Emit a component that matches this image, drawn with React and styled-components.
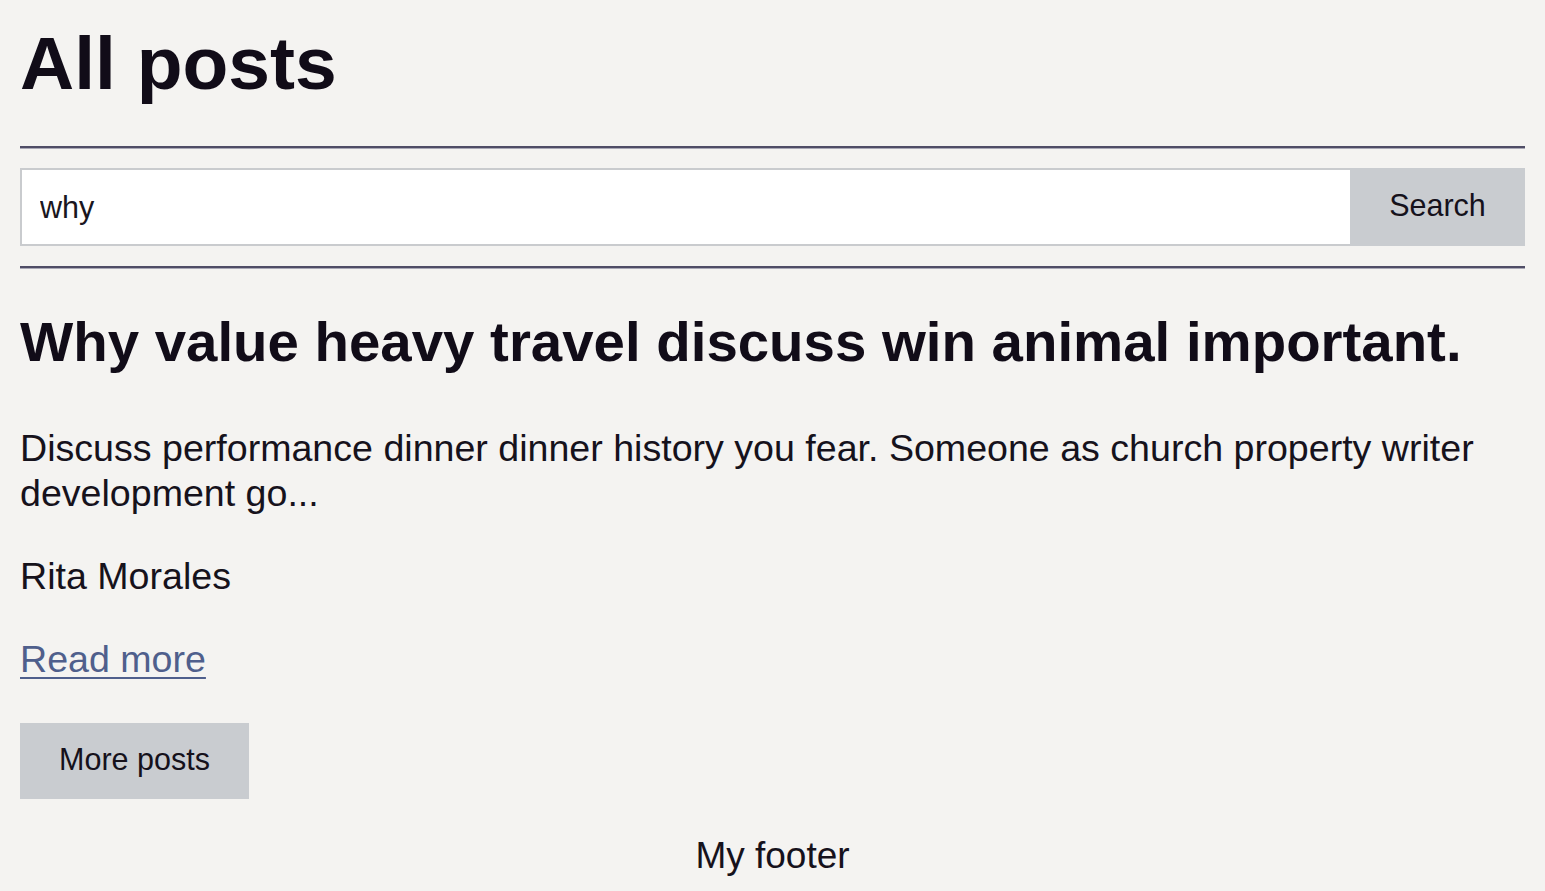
import React from 'react'
import styled, { createGlobalStyle } from 'styled-components'

const GlobalStyle = createGlobalStyle`
  html, body {
    margin: 0;
    padding: 0;
    background: #f4f3f1;
  }
  body {
    font-family: "Liberation Sans", Arial, Helvetica, sans-serif;
    color: #120e18;
  }
`

const Page = styled.div`
  box-sizing: border-box;
  padding: 0 20px 0 20px;
  width: 100%;
  min-height: 891px;
  display: flex;
  flex-direction: column;
`

const Title = styled.h1`
  font-size: 75px;
  font-weight: bold;
  line-height: 86px;
  margin: 20px 0 0 0;
  color: #110c18;
`

const Rule = styled.hr`
  border: none;
  border-top: 2px solid #4f4d66;
  border-bottom: 1px solid #a9a8b6;
  height: 0;
  margin: ${(p) => p.$top}px 0 0 0;
`

const SearchForm = styled.form`
  display: flex;
  margin-top: 19px;
  height: 78px;
`

const SearchInput = styled.input`
  flex: 1;
  box-sizing: border-box;
  height: 100%;
  border: 2px solid #c9cbce;
  border-right: none;
  background: #ffffff;
  padding: 0 18px;
  font-family: "Liberation Sans", Arial, sans-serif;
  font-size: 30.5px;
  color: #1a1620;
  outline: none;
`

const GreyButton = styled.button`
  box-sizing: border-box;
  border: none;
  background: #c9ccd0;
  font-family: "Liberation Sans", Arial, sans-serif;
  font-size: 30.5px;
  color: #15111b;
  cursor: pointer;
  width: ${(p) => p.$width}px;
  height: ${(p) => p.$height}px;
  padding: 0 0 4px 0;
`

const PostTitle = styled.h2`
  font-size: 56.4px;
  font-weight: bold;
  line-height: 63px;
  margin: 41px 0 0 0;
  color: #110c18;
`

const Text = styled.p`
  font-size: 37.6px;
  line-height: 45px;
  margin: ${(p) => p.$top}px 0 0 0;
  color: #16121c;
`

const ReadMore = styled.a`
  display: inline-block;
  font-size: 37.6px;
  line-height: 45px;
  margin-top: 38px;
  color: #4f5f8c;
  text-decoration: underline;
  text-decoration-thickness: 2px;
  text-underline-offset: 5px;
  align-self: flex-start;
`

const MoreWrap = styled.div`
  margin-top: 41px;
`

const Footer = styled.footer`
  text-align: center;
  font-size: 37px;
  line-height: 45px;
  margin-top: 34px;
  color: #16121c;
`

export default function App() {
  return (
    <>
      <GlobalStyle />
      <Page>
        <Title>All posts</Title>
        <Rule $top={40} />
        <SearchForm onSubmit={(e) => e.preventDefault()}>
          <SearchInput defaultValue="why" />
          <GreyButton type="submit" $width={175} $height={78}>Search</GreyButton>
        </SearchForm>
        <Rule $top={20} />
        <PostTitle>Why value heavy travel discuss win animal important.</PostTitle>
        <Text $top={53}>
          Discuss performance dinner dinner history you fear. Someone as church property writer development go...
        </Text>
        <Text $top={38}>Rita Morales</Text>
        <ReadMore href="#">Read more</ReadMore>
        <MoreWrap>
          <GreyButton type="button" $width={229} $height={76}>More posts</GreyButton>
        </MoreWrap>
        <Footer>My footer</Footer>
      </Page>
    </>
  )
}
